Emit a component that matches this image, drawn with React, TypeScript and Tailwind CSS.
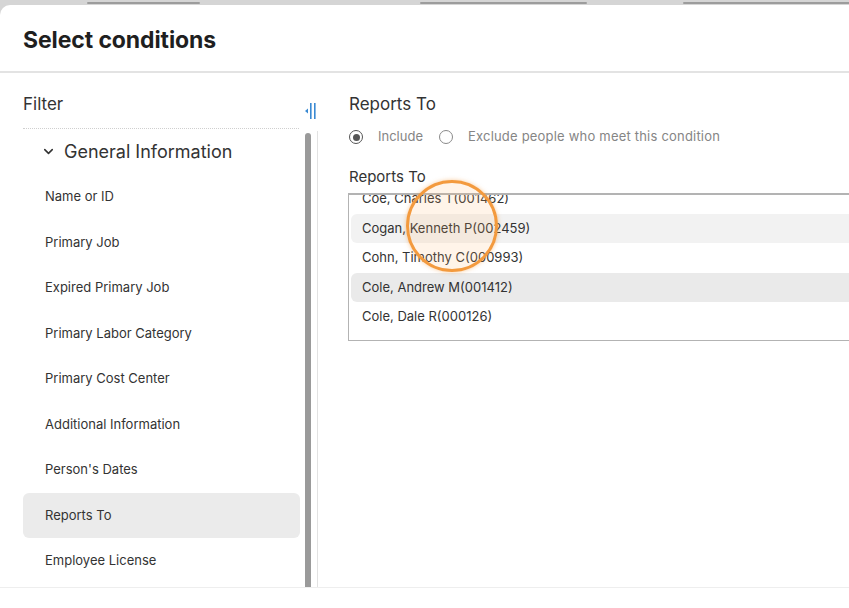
import React from 'react';
import { ChevronDown } from 'lucide-react';

const filterItems = [
  'Name or ID',
  'Primary Job',
  'Expired Primary Job',
  'Primary Labor Category',
  'Primary Cost Center',
  'Additional Information',
  "Person's Dates",
  'Reports To',
  'Employee License',
];

const people = [
  'Coe, Charles T(001462)',
  'Cogan, Kenneth P(002459)',
  'Cohn, Timothy C(000993)',
  'Cole, Andrew M(001412)',
  'Cole, Dale R(000126)',
  'Collier, Jill A(001781)',
];

const CollapseIcon = () => (
  <svg width="14" height="18" viewBox="0 0 14 18" className="text-[#3a8ad3]">
    <path d="M4 6.5 L1 9 L4 11.5 Z" fill="currentColor" />
    <rect x="6" y="1" width="1.6" height="16" fill="currentColor" />
    <rect x="10" y="1" width="1.6" height="16" fill="currentColor" />
  </svg>
);

const Radio = ({ checked }: { checked?: boolean }) => (
  <span
    className={`flex h-[14px] w-[14px] items-center justify-center rounded-full border-[1.5px] ${
      checked ? 'border-[#555]' : 'border-[#8a8a8a]'
    }`}
  >
    {checked && <span className="h-[7px] w-[7px] rounded-full bg-[#555]" />}
  </span>
);

const App: React.FC = () => {
  return (
    <div
      className="relative h-[608px] w-[849px] overflow-hidden bg-[#d5d5d5] text-[#333]"
      style={{ fontFamily: 'Inter, "Noto Sans", sans-serif' }}
    >
      {/* edges of the tabs behind the dialog */}
      <div className="flex h-[5px] pt-[2px]">
        <div className="ml-[87px] h-[2px] w-[113px] rounded-full bg-[#9c9c9c]" />
        <div className="ml-[220px] h-[2px] w-[167px] rounded-full bg-[#9c9c9c]" />
        <div className="ml-[96px] h-[2px] flex-1 rounded-l-full bg-[#9c9c9c]" />
      </div>

      <div className="flex h-[603px] flex-col rounded-tl-[10px] bg-white">
        <div className="flex h-[68px] shrink-0 items-center border-b-2 border-[#e3e3e3] px-[23px] pt-[5px]">
          <h1 className="text-[23px] font-bold tracking-[-0.1px] text-[#1f1f1f]">Select conditions</h1>
        </div>

        <div className="flex h-[514px] shrink-0">
          {/* filter tree */}
          <div className="flex w-[318px] shrink-0 flex-col pl-[23px]">
            <div className="flex h-[56px] shrink-0">
              <div className="w-[277px] border-b border-dotted border-[#cfcfcf] pt-[19px]">
                <span className="text-[17px] leading-[24px]">Filter</span>
              </div>
              <div className="ml-[5px] pt-[29px]">
                <CollapseIcon />
              </div>
            </div>

            <div className="flex min-h-0 flex-1">
              <div className="w-[277px] shrink-0">
                <div className="flex h-[45px] items-center pl-[18px] text-[18px]">
                  <ChevronDown size={15} strokeWidth={2.5} className="mr-[8px] text-[#333]" />
                  General Information
                </div>
                {filterItems.map((item) => (
                  <div
                    key={item}
                    className={`flex h-[45.5px] items-center rounded-md pl-[22px] text-[13px] ${
                      item === 'Reports To' ? 'bg-[#ebebeb]' : ''
                    }`}
                  >
                    {item}
                  </div>
                ))}
              </div>
              <div className="ml-[5px] mt-[4px] w-[6px] rounded-t-full bg-[#9a9a9a]" />
              <div className="ml-[6px] mt-[2px] w-px bg-[#e2e2e2]" />
            </div>
          </div>

          {/* condition editor */}
          <div className="flex-1 pl-[31px]">
            <div className="pt-[19px] text-[17px] leading-[24px]">Reports To</div>
            <div className="mt-[11px] flex h-[20px] items-center text-[13px] text-[#858585]">
              <Radio checked />
              <span className="ml-[15px]">Include</span>
              <span className="ml-[16px]">
                <Radio />
              </span>
              <span className="ml-[15px] tracking-[0.2px]">Exclude people who meet this condition</span>
            </div>
            <div className="mt-[20px] text-[15px] leading-[20px]">Reports To</div>
            <div className="ml-[-1px] mt-[6px] h-[148px] w-[620px] overflow-hidden border border-t-2 border-[#b3b3b3]">
              <div className="mt-[-11px]">
                {people.map((p, i) => (
                  <div key={p} className="h-[29.5px] px-[2px] py-[0.5px]">
                    <div
                      className={`flex h-full items-center rounded-md pl-[11px] text-[13px] ${
                        i === 1 ? 'bg-[#f2f2f2]' : i === 3 ? 'bg-[#eaeaea]' : ''
                      }`}
                    >
                      {p}
                    </div>
                  </div>
                ))}
              </div>
            </div>
          </div>
        </div>

        <div className="flex-1 border-t border-[#eeeeee]" />
      </div>

      {/* click marker */}
      <div className="pointer-events-none absolute left-[406px] top-[180px] h-[92px] w-[92px] rounded-full border-[3px] border-[#f39a3e] bg-[#ffb46a]/15 shadow-[0_0_4px_rgba(243,154,62,0.5)]" />
    </div>
  );
};

export default App;
